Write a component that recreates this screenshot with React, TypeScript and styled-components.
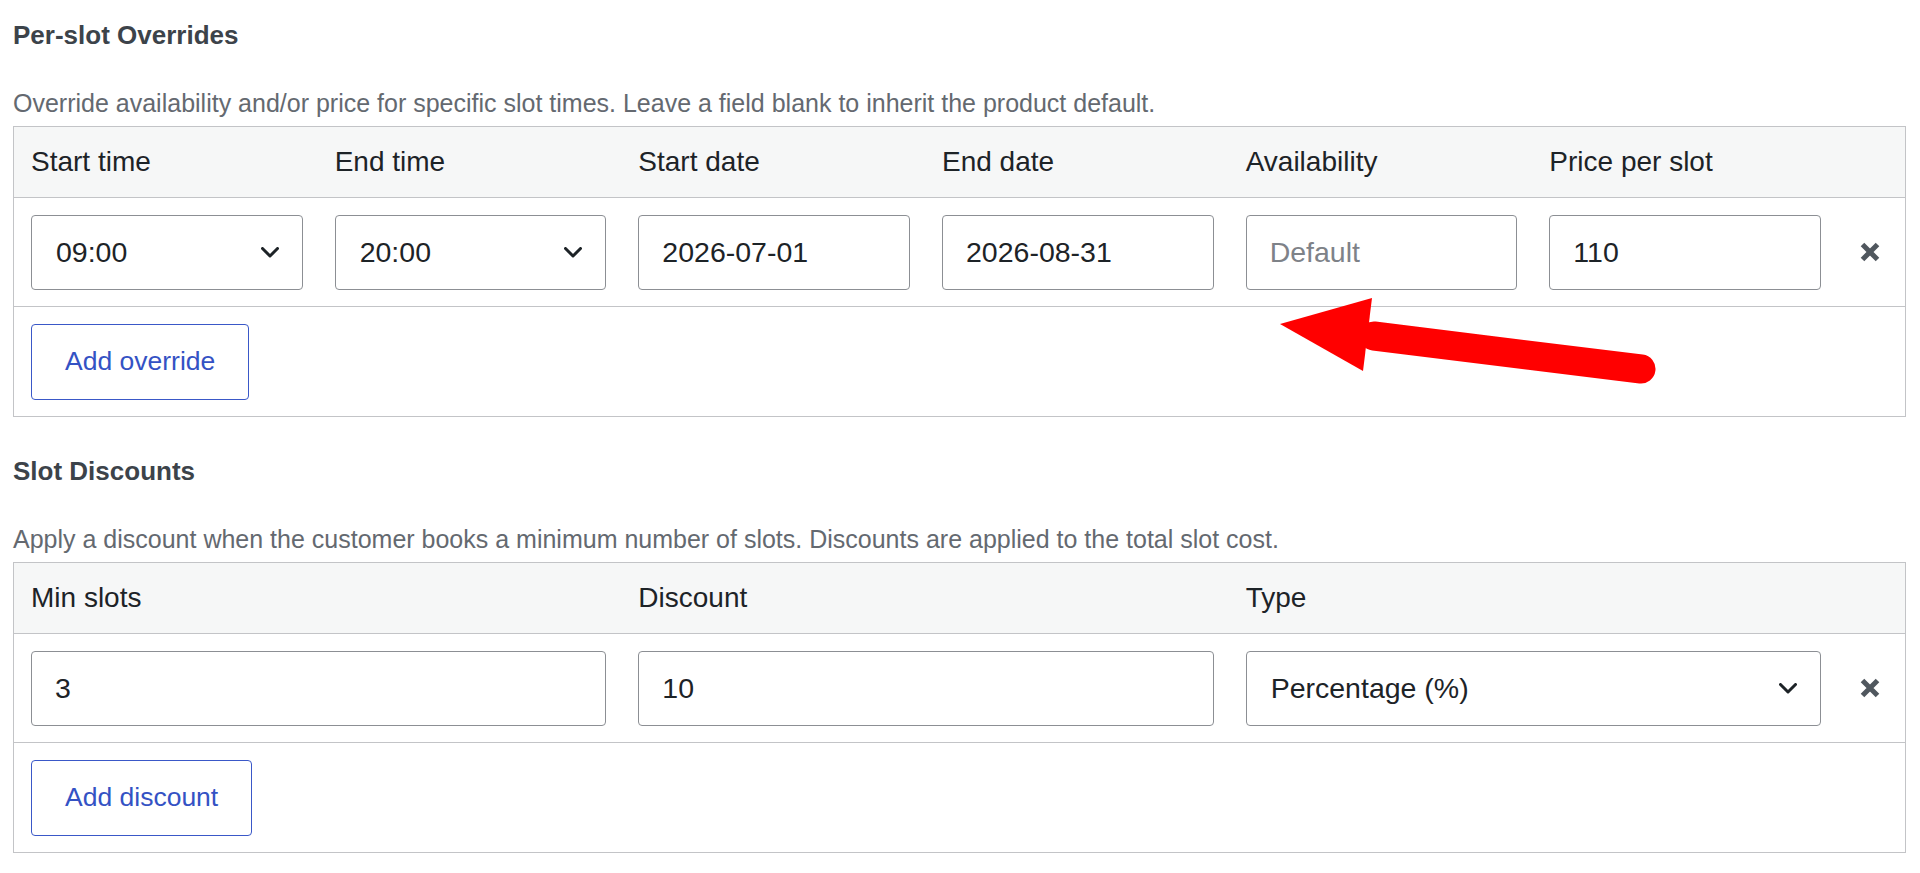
import styled, { createGlobalStyle } from 'styled-components';

type Field =
  | { kind: 'select'; value: string }
  | { kind: 'input'; value?: string; placeholder?: string };

interface TableSpec {
  title: string;
  description: string;
  columns: string[];
  fields: Field[];
  action: string;
}

const sections: TableSpec[] = [
  {
    title: 'Per-slot Overrides',
    description:
      'Override availability and/or price for specific slot times. Leave a field blank to inherit the product default.',
    columns: ['Start time', 'End time', 'Start date', 'End date', 'Availability', 'Price per slot'],
    fields: [
      { kind: 'select', value: '09:00' },
      { kind: 'select', value: '20:00' },
      { kind: 'input', value: '2026-07-01' },
      { kind: 'input', value: '2026-08-31' },
      { kind: 'input', placeholder: 'Default' },
      { kind: 'input', value: '110' },
    ],
    action: 'Add override',
  },
  {
    title: 'Slot Discounts',
    description:
      'Apply a discount when the customer books a minimum number of slots. Discounts are applied to the total slot cost.',
    columns: ['Min slots', 'Discount', 'Type'],
    fields: [
      { kind: 'input', value: '3' },
      { kind: 'input', value: '10' },
      { kind: 'select', value: 'Percentage (%)' },
    ],
    action: 'Add discount',
  },
];

export default function App() {
  return (
    <>
      <GlobalStyle />
      <Page>
        {sections.map((section) => (
          <Section key={section.title}>
            <SectionTitle>{section.title}</SectionTitle>
            <Description>{section.description}</Description>
            <Table>
              <HeaderRow $cols={section.columns.length}>
                {section.columns.map((col) => (
                  <HeaderCell key={col}>{col}</HeaderCell>
                ))}
                <span />
              </HeaderRow>
              <BodyRow $cols={section.columns.length}>
                {section.fields.map((field, idx) => (
                  <Cell key={idx}>
                    {field.kind === 'select' ? (
                      <SelectBox>
                        <span>{field.value}</span>
                        <Chevron viewBox="0 0 18 11" aria-hidden>
                          <polyline points="1.5,1.5 9,9 16.5,1.5" />
                        </Chevron>
                      </SelectBox>
                    ) : (
                      <TextInput
                        type="text"
                        readOnly
                        defaultValue={field.value}
                        placeholder={field.placeholder}
                      />
                    )}
                  </Cell>
                ))}
                <RemoveButton aria-label="Remove">
                  <svg width="22" height="22" viewBox="0 0 22 22">
                    <path d="M3.5 3.5 L18.5 18.5 M18.5 3.5 L3.5 18.5" />
                  </svg>
                </RemoveButton>
              </BodyRow>
              <Footer>
                <SecondaryButton>{section.action}</SecondaryButton>
              </Footer>
            </Table>
          </Section>
        ))}

        <Arrow width="400" height="100" viewBox="0 0 400 100" aria-hidden>
          <line x1="104" y1="46" x2="371" y2="79" />
          <polygon points="10,34 102,8 93,81" />
        </Arrow>
      </Page>
    </>
  );
}

const GlobalStyle = createGlobalStyle`
  * {
    box-sizing: border-box;
  }
  body {
    margin: 0;
    background: #fff;
    color: #1d2327;
    font-family: "Liberation Sans", Arial, sans-serif;
  }
`;

const Page = styled.div`
  position: relative;
  padding: 18px 14px 0 13px;
`;

const Section = styled.section`
  & + & {
    margin-top: 37px;
  }
`;

const SectionTitle = styled.h3`
  margin: 0;
  font-size: 26px;
  font-weight: 700;
  line-height: 34px;
  color: #3c434a;
`;

const Description = styled.p`
  margin: 34px 0 6px;
  font-size: 25px;
  line-height: 34px;
  color: #646970;
`;

const Table = styled.div`
  border: 1px solid #c3c4c7;
`;

const Row = styled.div<{ $cols: number }>`
  display: grid;
  grid-template-columns: repeat(${({ $cols }) => $cols}, 1fr) 69px;
  align-items: center;
  border-bottom: 1px solid #c3c4c7;
`;

const HeaderRow = styled(Row)`
  height: 71px;
  background: #f6f7f7;
`;

const HeaderCell = styled.div`
  padding: 0 15px 0 17px;
  font-size: 28px;
  color: #1d2327;
`;

const BodyRow = styled(Row)`
  height: 109px;
`;

const Cell = styled.div`
  padding: 0 15px 0 17px;
`;

const TextInput = styled.input`
  display: block;
  width: 100%;
  height: 75px;
  margin: 0;
  padding: 0 23px;
  border: 1px solid #8c8f94;
  border-radius: 4px;
  background: #fff;
  font-family: inherit;
  font-size: 28.5px;
  color: #1d2327;
  outline: none;

  &::placeholder {
    color: #7e8288;
  }
`;

const SelectBox = styled.div`
  display: flex;
  align-items: center;
  justify-content: space-between;
  height: 75px;
  padding: 0 23px 0 24px;
  border: 1px solid #8c8f94;
  border-radius: 4px;
  background: #fff;
  font-size: 28.5px;
  color: #1d2327;
`;

const Chevron = styled.svg`
  width: 18px;
  height: 11px;
  fill: none;
  stroke: #1d2327;
  stroke-width: 3;
  stroke-linecap: round;
  stroke-linejoin: round;
`;

const RemoveButton = styled.button`
  display: flex;
  align-items: center;
  justify-content: center;
  padding: 0;
  border: 0;
  background: none;
  cursor: pointer;

  svg {
    fill: none;
    stroke: #50575e;
    stroke-width: 5;
  }
`;

const Footer = styled.div`
  display: flex;
  align-items: center;
  height: 109px;
  padding: 0 17px;
`;

const SecondaryButton = styled.button`
  height: 76px;
  padding: 0 33px;
  border: 1.5px solid #3a58c8;
  border-radius: 4px;
  background: #fff;
  font-family: inherit;
  font-size: 26.5px;
  color: #3452c4;
  cursor: pointer;
`;

const Arrow = styled.svg`
  position: absolute;
  left: 1270px;
  top: 290px;
  pointer-events: none;

  line {
    stroke: #ff0000;
    stroke-width: 29;
    stroke-linecap: round;
  }

  polygon {
    fill: #ff0000;
  }
`;
